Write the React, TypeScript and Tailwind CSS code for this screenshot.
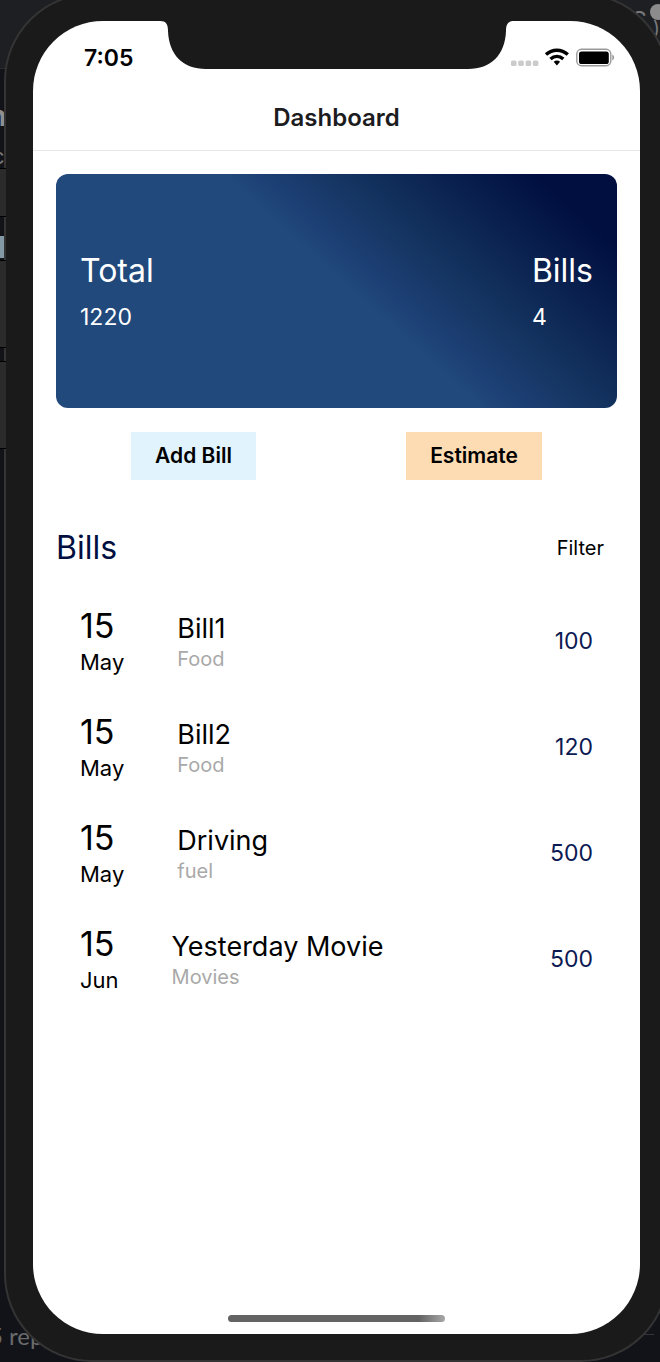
const bills = [
  { day: "15", month: "May", name: "Bill1", category: "Food", amount: 100 },
  { day: "15", month: "May", name: "Bill2", category: "Food", amount: 120 },
  { day: "15", month: "May", name: "Driving", category: "fuel", amount: 500 },
  { day: "15", month: "Jun", name: "Yesterday Movie", category: "Movies", amount: 500 },
];

function Notch() {
  return (
    <svg
      viewBox="0 0 354 49"
      className="absolute top-0 left-1/2 w-[354px] h-[49px] -translate-x-1/2"
      aria-hidden="true"
    >
      <path
        d="M0 0 C6 0 8 3 8 10 C9 34 23 48 46 48 H308 C331 48 345 34 346 10 C346 3 348 0 354 0 Z"
        fill="#1a1a1a"
      />
    </svg>
  );
}

function StatusBar() {
  return (
    <div className="flex items-center justify-between h-[73px] pl-[51px] pr-[26px]">
      <span className="text-[23px] leading-6 font-semibold text-black">7:05</span>
      <svg viewBox="0 0 104 20" className="w-[104px] h-5" aria-hidden="true">
        <g fill="#cbcbcb">
          <rect x="1" y="12.5" width="5.6" height="5.6" rx="1.6" />
          <rect x="8.2" y="12.5" width="5.6" height="5.6" rx="1.6" />
          <rect x="15.6" y="12.5" width="5.6" height="5.6" rx="1.6" />
          <rect x="22.8" y="12.5" width="5.6" height="5.6" rx="1.6" />
        </g>
        <g fill="none" stroke="#000" strokeWidth="3.4">
          <path d="M36 6.5 C42.3 0.8 51.5 0.8 57.8 6.5" />
          <path d="M40.5 11.1 C44.3 7.6 49.5 7.6 53.3 11.1" />
        </g>
        <path d="M43.7 13.8 C45.7 12.2 48.1 12.2 50.1 13.8 L46.9 17.4 Z" fill="#000" />
        <rect x="66.8" y="1.3" width="34" height="16.4" rx="4.6" fill="none" stroke="#9a9a9a" strokeWidth="1.4" />
        <rect x="69" y="3.4" width="29.8" height="12.6" rx="2.6" fill="#000" />
        <path d="M102.4 6.6 C104.4 7.6 104.4 11.6 102.4 12.6 Z" fill="#8a8a8a" />
      </svg>
    </div>
  );
}

function Desktop() {
  return (
    <div className="absolute inset-0 overflow-hidden" aria-hidden="true">
      <div className="absolute inset-x-0 top-0 h-[69px] bg-[#1e1f23] border-b border-[#2a2b2f]" />
      <span className="absolute left-[-11px] top-[98px] text-[28px] leading-9 font-bold text-[#8f8f8f]">n</span>
      <span className="absolute left-[-8px] top-[140px] text-[22px] leading-8 text-[#77787a]">c</span>
      <div className="absolute left-0 top-[236px] h-[22px] w-[5px] bg-[#8499a6]" />
      <span className="absolute left-[-11px] top-[1322px] font-['Lato'] text-[24px] leading-7 text-[#6a6b6d]">5 rep</span>
      <div className="absolute right-[-6px] top-1 size-4 rounded-full bg-[#8c8c8c]" />
      <span className="absolute right-[13px] top-[9px] text-[24px] leading-6 text-[#77787a]">S</span>
      <span className="absolute right-0 top-[16px] text-[20px] leading-6 text-[#77787a]">)</span>
      <div className="absolute right-[6px] top-[1334px] h-px w-4 bg-[#33353a]" />
    </div>
  );
}

function SideButtons() {
  return (
    <div className="absolute left-0 top-[168px] flex flex-col w-[6px]" aria-hidden="true">
      <div className="h-[49px] bg-[#2b2b2b] border-y border-black" />
      <div className="mt-[43px] h-[88px] bg-[#2b2b2b] border-y border-black" />
      <div className="mt-[13px] h-[88px] bg-[#2b2b2b] border-y border-black" />
    </div>
  );
}

export default function App() {
  return (
    <div className="relative flex min-h-screen flex-col overflow-hidden bg-[#111318] font-['Inter','Liberation_Sans',sans-serif]">
      <Desktop />
      <div className="relative -mt-[7px] -mr-[9px] ml-1 flex flex-1 flex-col rounded-[88px] border-2 border-[#343434] bg-[#1a1a1a] px-[27px] py-[26px]">
        <main className="relative flex flex-1 flex-col overflow-hidden rounded-[70px] bg-white">
          <Notch />
          <StatusBar />
          <header className="flex h-[57px] items-center justify-center border-b border-[#e6e6e6] pb-2">
            <h1 className="text-[24px] leading-8 font-semibold text-[#1c1c1e]">Dashboard</h1>
          </header>

          <div className="flex flex-1 flex-col px-[23px] pt-[23px]">
            <section className="flex h-[234px] items-center justify-between rounded-xl bg-[linear-gradient(222deg,#000f40_10%,#14335f_33%,#1c3f74_43%,#21497b_48%)] px-6 text-white">
              <div>
                <h2 className="text-[32px] leading-10">Total</h2>
                <p className="mt-3 text-[23px] leading-7">1220</p>
              </div>
              <div>
                <h2 className="text-[32px] leading-10">Bills</h2>
                <p className="mt-3 text-[23px] leading-7">4</p>
              </div>
            </section>

            <div className="mt-6 flex justify-around">
              <button type="button" className="h-12 bg-[#e1f4fd] px-6 text-[21px] leading-6 font-semibold text-black">
                Add Bill
              </button>
              <button type="button" className="h-12 bg-[#fddcb3] px-6 text-[21px] leading-6 font-semibold text-black">
                Estimate
              </button>
            </div>

            <section className="mt-12">
              <div className="flex items-center justify-between pr-[13px]">
                <h2 className="text-[32px] leading-10 text-[#000f40]">Bills</h2>
                <button type="button" className="text-[20px] leading-6 text-black">
                  Filter
                </button>
              </div>
              <ul className="mt-5">
                {bills.map((bill) => (
                  <li key={bill.name} className="flex h-[106px] items-center gap-[53px] px-6">
                    <div className="pt-px text-black">
                      <p className="text-[34px] leading-10">{bill.day}</p>
                      <p className="text-[22px] leading-8">{bill.month}</p>
                    </div>
                    <div className="flex-1 pt-1">
                      <p className="text-[27px] leading-8 text-black">{bill.name}</p>
                      <p className="text-[20px] leading-7 text-[#a9a9a9]">{bill.category}</p>
                    </div>
                    <p className="text-[23px] leading-7 text-[#0c1a52]">{bill.amount}</p>
                  </li>
                ))}
              </ul>
            </section>
          </div>

          <div className="mx-auto mb-3 h-[7px] w-[217px] rounded-full bg-[linear-gradient(90deg,#636363,#636363_88%,#a8a8a8)]" />
        </main>
      </div>
      <SideButtons />
    </div>
  );
}
